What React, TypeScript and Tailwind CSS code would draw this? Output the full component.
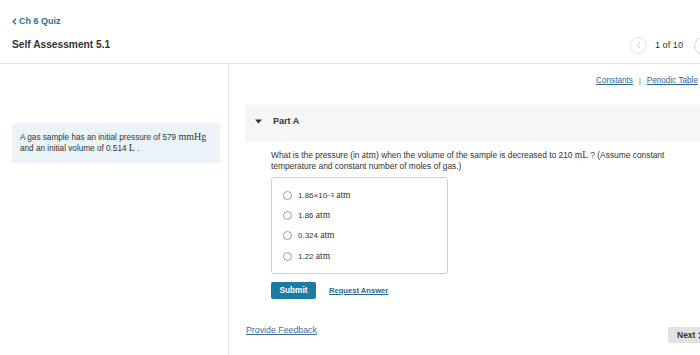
import React from "react";

function M({ children, size }: { children: React.ReactNode; size: "s" | "l" }) {
  return size === "l" ? (
    <span className="font-['Liberation_Serif',serif] text-[10px] leading-[10px]">{children}</span>
  ) : (
    <span className="font-['Liberation_Serif',serif] text-[9.5px] leading-[10px]">{children}</span>
  );
}

function Radio() {
  return <span className="inline-block w-[9px] h-[9px] rounded-full border border-[#9a9a9a] bg-white shrink-0" />;
}

export default function App() {
  const options = [
    <>
      1.86×10<sup className="text-[6px] leading-none relative -top-[1px]">−3</sup> <M size="s">atm</M>
    </>,
    <>
      1.86 <M size="s">atm</M>
    </>,
    <>
      0.324 <M size="s">atm</M>
    </>,
    <>
      1.22 <M size="s">atm</M>
    </>,
  ];
  return (
    <div className="w-[700px] h-[355px] overflow-hidden bg-white font-['Liberation_Sans','Arial',sans-serif] text-[#333]">
      {/* Header */}
      <div className="h-[64px] border-b border-[#e4e4e4] flex">
        <div className="pl-[12px] pt-[16px]">
          <div className="text-[9px] leading-[11px] font-bold text-[#2b6f99] flex items-center">
            <svg width="5" height="7" viewBox="0 0 5 7" className="mr-[2px]">
              <path d="M4 0.8 L1.2 3.5 L4 6.2" fill="none" stroke="#2b6f99" strokeWidth="1.4" />
            </svg>
            Ch 6 Quiz
          </div>
          <div className="mt-[12px] text-[10.2px] leading-[12px] font-bold text-[#333]">Self Assessment 5.1</div>
        </div>
        <div className="ml-auto mr-[-12px] mt-[37px] h-[17px] flex items-center">
          <span className="w-[17px] h-[17px] rounded-full border border-[#e2e2e2] flex items-center justify-center">
            <svg width="5" height="7" viewBox="0 0 5 7">
              <path d="M4 0.8 L1.2 3.5 L4 6.2" fill="none" stroke="#c8c8c8" strokeWidth="1" />
            </svg>
          </span>
          <span className="ml-[8px] text-[9.2px] leading-[11px] text-[#333]">1 of 10</span>
          <span className="ml-[11px] w-[18px] h-[18px] rounded-full border border-[#d6d6d6]" />
        </div>
      </div>

      {/* Body */}
      <div className="flex h-[291px]">
        <div className="w-[229px] border-r border-[#e4e4e4] shrink-0 pl-[12px] pr-[8px]">
          <div className="mt-[59px] bg-[#eaf4f8] pl-[8px] pr-[4px] py-[9px] text-[8.2px] leading-[10px] text-[#333]">
            A gas sample has an initial pressure of 579 <M size="l">mmHg</M>
            <br />
            and an initial volume of 0.514 <M size="l">L</M> .
          </div>
        </div>

        <div className="flex-1 pl-[16px] flex flex-col">
          <div className="mt-[12px] flex justify-end items-center pr-[2px] text-[8.2px] leading-[10px] text-[#2d6690]">
            <span className="underline">Constants</span>
            <span className="mx-[6px] text-[#555] text-[7px]">|</span>
            <span className="underline">Periodic Table</span>
          </div>

          <div className="mt-[19px] h-[37px] bg-[#f6f6f6] flex items-start pt-[11px] pl-[10px]">
            <svg width="7" height="5" viewBox="0 0 7 5" className="mt-[3px]">
              <path d="M0 0.5 L7 0.5 L3.5 4.5 Z" fill="#333" />
            </svg>
            <span className="ml-[11px] text-[9px] leading-[11px] font-bold text-[#333]">Part A</span>
          </div>

          <div className="pl-[26px]">
            <div className="mt-[8px] text-[8.4px] leading-[11px] text-[#333] w-[420px]">
              What is the pressure (in <M size="s">atm</M>) when the volume of the sample is decreased to 210{" "}
              <M size="s">mL</M> ? (Assume constant temperature and constant number of moles of gas.)
            </div>

            <div className="mt-[5px] w-[177px] h-[97px] border border-[#cfcfcf] rounded-[3px] pt-[7px] pl-[11px]">
              {options.map((o, i) => (
                <div key={i} className="h-[20.3px] flex items-center">
                  <Radio />
                  <span className="ml-[6px] text-[8px] leading-[10px] text-[#333]">{o}</span>
                </div>
              ))}
            </div>

            <div className="mt-[8px] flex items-center">
              <div className="w-[45px] h-[17px] bg-[#1b7ba4] rounded-[2px] flex items-center justify-center text-white font-bold text-[8.3px]">
                Submit
              </div>
              <span className="ml-[13px] text-[7.6px] font-bold underline text-[#2d6690]">Request Answer</span>
            </div>
          </div>

          <div className="mt-[26px] flex items-start mr-[-14px]">
            <span className="ml-[1px] text-[8.8px] leading-[11px] underline text-[#3c6f97]">Provide Feedback</span>
            <div className="ml-auto mt-[2px] w-[46px] h-[16px] bg-[#e2e2e2] rounded-[2px] flex items-center pl-[9px] text-[8.5px] font-bold text-[#333]">
              Next
              <svg width="5" height="7" viewBox="0 0 5 7" className="ml-[3px]">
                <path d="M1 0.8 L3.8 3.5 L1 6.2" fill="none" stroke="#333" strokeWidth="1.3" />
              </svg>
            </div>
          </div>
        </div>
      </div>
    </div>
  );
}
